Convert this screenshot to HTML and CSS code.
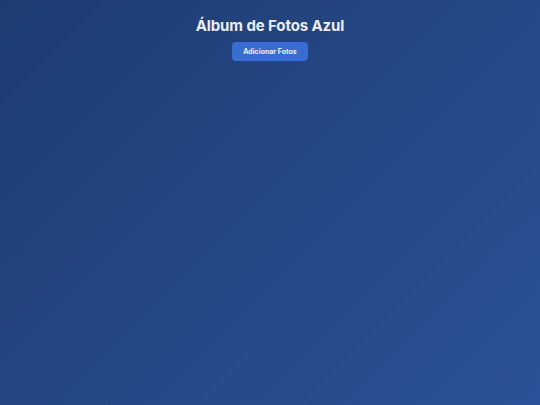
FILE: index.html
```html
<!DOCTYPE html>
<html lang="pt">
<head>
    <meta charset="UTF-8">
    <meta name="viewport" content="width=device-width, initial-scale=1.0">
    <title>Álbum de Fotos Azul</title>
    <link rel="stylesheet" href="styles.css">
</head>
<body>
    <div class="header">
        <h1>Álbum de Fotos Azul</h1>
        <button id="addPhotos">Adicionar Fotos</button>
    </div>

    <div class="gallery" id="gallery">
        <!-- fotos -->
    </div>
</body>
</html>
```

FILE: styles.css
```css
html, body {
    height: 100%;
}
body {
    font-family: Inter, "Open Sans", sans-serif;
    margin: 0;
    padding: 0;
    background: linear-gradient(135deg, #1e3c72, #2a5298);
    color: #e9eef8;
}
.header {
    text-align: center;
    padding-top: 16px;
}
.header h1 {
    font-size: 15px;
    font-weight: 700;
    letter-spacing: -0.1px;
    margin: 0 0 3px 0;
}
button {
    background-color: #3a6dd1;
    color: #e9eef8;
    border: none;
    padding: 5px 11px;
    border-radius: 4px;
    font-family: Inter, sans-serif;
    font-size: 7px;
    font-weight: 700;
    cursor: pointer;
}
```
